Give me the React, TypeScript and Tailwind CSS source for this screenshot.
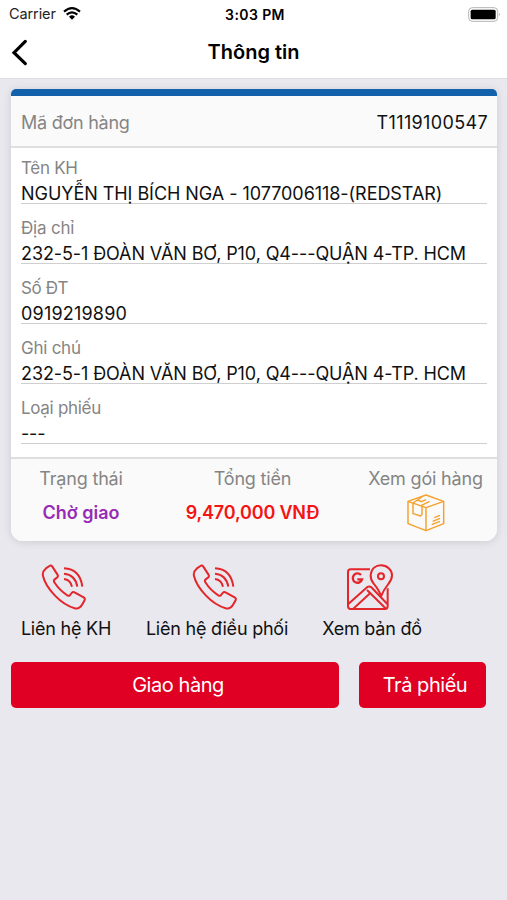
import type { ReactNode } from 'react';

type Field = {
  label: string;
  value: string;
  labelClass: string;
  valueClass: string;
};

const fields: Field[] = [
  {
    label: 'Tên KH',
    value: 'NGUYỄN THỊ BÍCH NGA - 1077006118-(REDSTAR)',
    labelClass: 'tracking-[-0.3px]',
    valueClass: 'tracking-[-0.05px]',
  },
  {
    label: 'Địa chỉ',
    value: '232-5-1 ĐOÀN VĂN BƠ, P10, Q4---QUẬN 4-TP. HCM',
    labelClass: 'tracking-[-0.2px]',
    valueClass: 'tracking-[-0.1px]',
  },
  { label: 'Số ĐT', value: '0919219890', labelClass: 'tracking-[-0.4px]', valueClass: 'tracking-[0.2px]' },
  {
    label: 'Ghi chú',
    value: '232-5-1 ĐOÀN VĂN BƠ, P10, Q4---QUẬN 4-TP. HCM',
    labelClass: 'tracking-[-0.25px]',
    valueClass: 'tracking-[-0.1px]',
  },
  { label: 'Loại phiếu', value: '---', labelClass: 'tracking-[-0.3px]', valueClass: 'tracking-[-0.2px]' },
];

const WifiIcon = () => (
  <svg width="18" height="14" viewBox="0 0 54 42" fill="none" stroke="#000" strokeWidth="6.5">
    <path d="M3 14 Q27 -7 51 14" />
    <path d="M11 23 Q27 9 43 23" />
    <path d="M18 29 Q27 21 36 29 L27 38 Z" fill="#000" stroke="none" />
  </svg>
);

const BatteryIcon = () => (
  <svg width="33" height="15" viewBox="0 0 99 45" fill="none">
    <rect x="2" y="2" width="87" height="41" rx="11" stroke="#b5b5b5" strokeWidth="3" />
    <rect x="8" y="8" width="75" height="29" rx="5" fill="#000" />
    <path d="M93 17 Q98 22 93 28 Z" fill="#9a9a9a" />
  </svg>
);

const BackIcon = () => (
  <svg width="17" height="27" viewBox="0 0 51 81" fill="none" stroke="#000" strokeWidth="9.5">
    <path d="M43 7 L9 41 L43 74" strokeLinecap="round" strokeLinejoin="miter" />
  </svg>
);

const PhoneIcon = () => (
  <svg width="46" height="48" viewBox="33 25 138 144" fill="none" stroke="#e3262b" strokeWidth="6">
    <path
      strokeLinejoin="round"
      d="M58 34 Q63 30 67 36 L82 59 Q86 65 81 69 L74 74 Q70 77 73 83 Q89 108 112 122 Q118 125 121 120 L125 115 Q129 110 135 114 L161 128 Q167 132 163 138 L157 149 Q149 164 134 161 Q103 152 75 123 Q45 91 39 64 Q36 51 47 42 Z"
    />
    <path d="M102 41 Q150 43 157 96" />
    <path d="M102 57 Q136 60 142 96" />
    <path d="M102 73 Q121 75 126 96" />
  </svg>
);

const MapIcon = () => (
  <svg width="48" height="48" viewBox="33 25 144 144" fill="none" stroke="#e3262b" strokeWidth="6">
    <path strokeLinejoin="round" d="M105 44 H47 Q39 44 39 52 V155 Q39 163 47 163 H150 Q158 163 158 155 V101" />
    <path d="M40 148 L97 97 Q103 93 109 98 L157 148" />
    <path d="M55 162 L107 114" />
    <path d="M96 106 L153 162" />
    <path strokeLinejoin="round" d="M138 125 Q133 107 116 87 Q106 74 107 61 C109 42 122 32 138 32 C156 32 171 45 171 62 Q171 75 160 88 Q145 107 138 125 Z" />
    <circle cx="138" cy="65" r="9" />
    <path d="M78 61 A14 14 0 1 0 81 74 H67" strokeWidth="7" />
  </svg>
);

const BoxIcon = () => (
  <svg width="40" height="38" viewBox="32 26 120 114" fill="none" stroke="#f5a12d" strokeWidth="4.4" strokeLinejoin="round">
    <path d="M92 29 L145 48 V115 L92 136 L38 115 V48 Z" />
    <path d="M38 48 L92 67 L145 48 M92 67 V135" />
    <path d="M53 53 L80 35 M77 61 L103 48 M66 44 L79 49 L92 43" />
    <path d="M53 54 V85 L76 92 L80 87 V63" />
    <path d="M117 97 L134 90 M112 108 L134 99 M109 118 L134 108" />
  </svg>
);

const Action = ({ icon, label, className }: { icon: ReactNode; label: string; className: string }) => (
  <button className={`flex flex-col items-center ${className}`}>
    <span className="mr-[5px] flex h-12 items-center">{icon}</span>
    <span className="mt-[6px] text-[18px] leading-6 whitespace-nowrap">{label}</span>
  </button>
);

const App = () => {
  return (
    <div className="h-[900px] w-full overflow-hidden bg-[#e9e8ee] font-['Inter',sans-serif] text-[#111]">
      {/* Status bar + title */}
      <header className="h-[78px] bg-white text-black shadow-[0_1px_0_#dedde0]">
        <div className="grid h-7 grid-cols-[1fr_80px_1fr] items-center pr-[6px] pl-[9px]">
          <div className="flex items-center gap-[7px]">
            <span className="text-[14.5px] tracking-[-0.1px] text-[#222]">Carrier</span>
            <WifiIcon />
          </div>
          <span className="text-center text-[14px] font-semibold tracking-[0.4px] whitespace-nowrap">3:03 PM</span>
          <div className="flex justify-end">
            <BatteryIcon />
          </div>
        </div>
        <div className="grid h-12 grid-cols-[60px_1fr_60px] items-center">
          <button className="pl-[11px]" aria-label="Back">
            <BackIcon />
          </button>
          <h1 className="text-center text-[20px] font-semibold">Thông tin</h1>
        </div>
      </header>

      {/* Order card */}
      <section className="mt-[11px] mr-[10px] ml-[11px] overflow-hidden rounded-t-[5px] rounded-b-xl bg-white shadow-[0_1px_8px_rgba(0,0,0,0.13)]">
        <div className="h-[7px] bg-[#1261aa]" />
        <div className="flex h-[52px] items-center justify-between border-b-2 border-[#e0e0e0] bg-[#fafafa] px-[10px] pt-[2px] text-[18px]">
          <span className="tracking-[-0.25px] text-[#858585]">Mã đơn hàng</span>
          <span className="-mr-px tracking-[0.35px]">T1119100547</span>
        </div>

        <div className="flex flex-col gap-[14px] px-[10px] pt-[10px] pb-[13px]">
          {fields.map((field) => (
            <div key={field.label} className="flex flex-col gap-[2px]">
              <span className={`h-5 text-[17px] leading-5 text-[#858585] ${field.labelClass}`}>{field.label}</span>
              <span className={`h-6 border-b border-[#cfcfcf] text-[18px] leading-[27px] whitespace-nowrap ${field.valueClass}`}>
                {field.value}
              </span>
            </div>
          ))}
        </div>

        <div className="grid h-[84px] grid-cols-[140px_203px_143px] border-t-2 border-[#dedede] bg-[#fafafa] pt-2 text-center text-[18px] leading-6 tracking-[-0.18px]">
          <div>
            <p className="text-[#858585]">Trạng thái</p>
            <p className="mt-[10px] font-semibold tracking-[0px] text-[#972bb5]">Chờ giao</p>
          </div>
          <div>
            <p className="text-[#858585]">Tổng tiền</p>
            <p className="mt-[10px] font-semibold text-[#f41414]">9,470,000 VNĐ</p>
          </div>
          <div className="flex flex-col items-center">
            <p className="whitespace-nowrap text-[#858585]">Xem gói hàng</p>
            <span className="mt-[3px]">
              <BoxIcon />
            </span>
          </div>
        </div>
      </section>

      {/* Contact shortcuts */}
      <div className="mt-[22px] flex pl-[16px] tracking-[-0.22px]">
        <Action icon={<PhoneIcon />} label="Liên hệ KH" className="w-[100px]" />
        <Action icon={<PhoneIcon />} label="Liên hệ điều phối" className="ml-[25px] w-[152px]" />
        <Action icon={<MapIcon />} label="Xem bản đồ" className="ml-[25px] w-[108px]" />
      </div>

      <div className="mt-[21px] flex gap-5 pl-[11px] text-[20px] tracking-[-0.45px] text-white">
        <button className="h-[46px] w-[328px] rounded-[5px] bg-[#df0024] pl-[6px]">Giao hàng</button>
        <button className="h-[46px] w-[127px] rounded-[5px] bg-[#df0024] pl-[5px]">Trả phiếu</button>
      </div>
    </div>
  );
};

export default App;
